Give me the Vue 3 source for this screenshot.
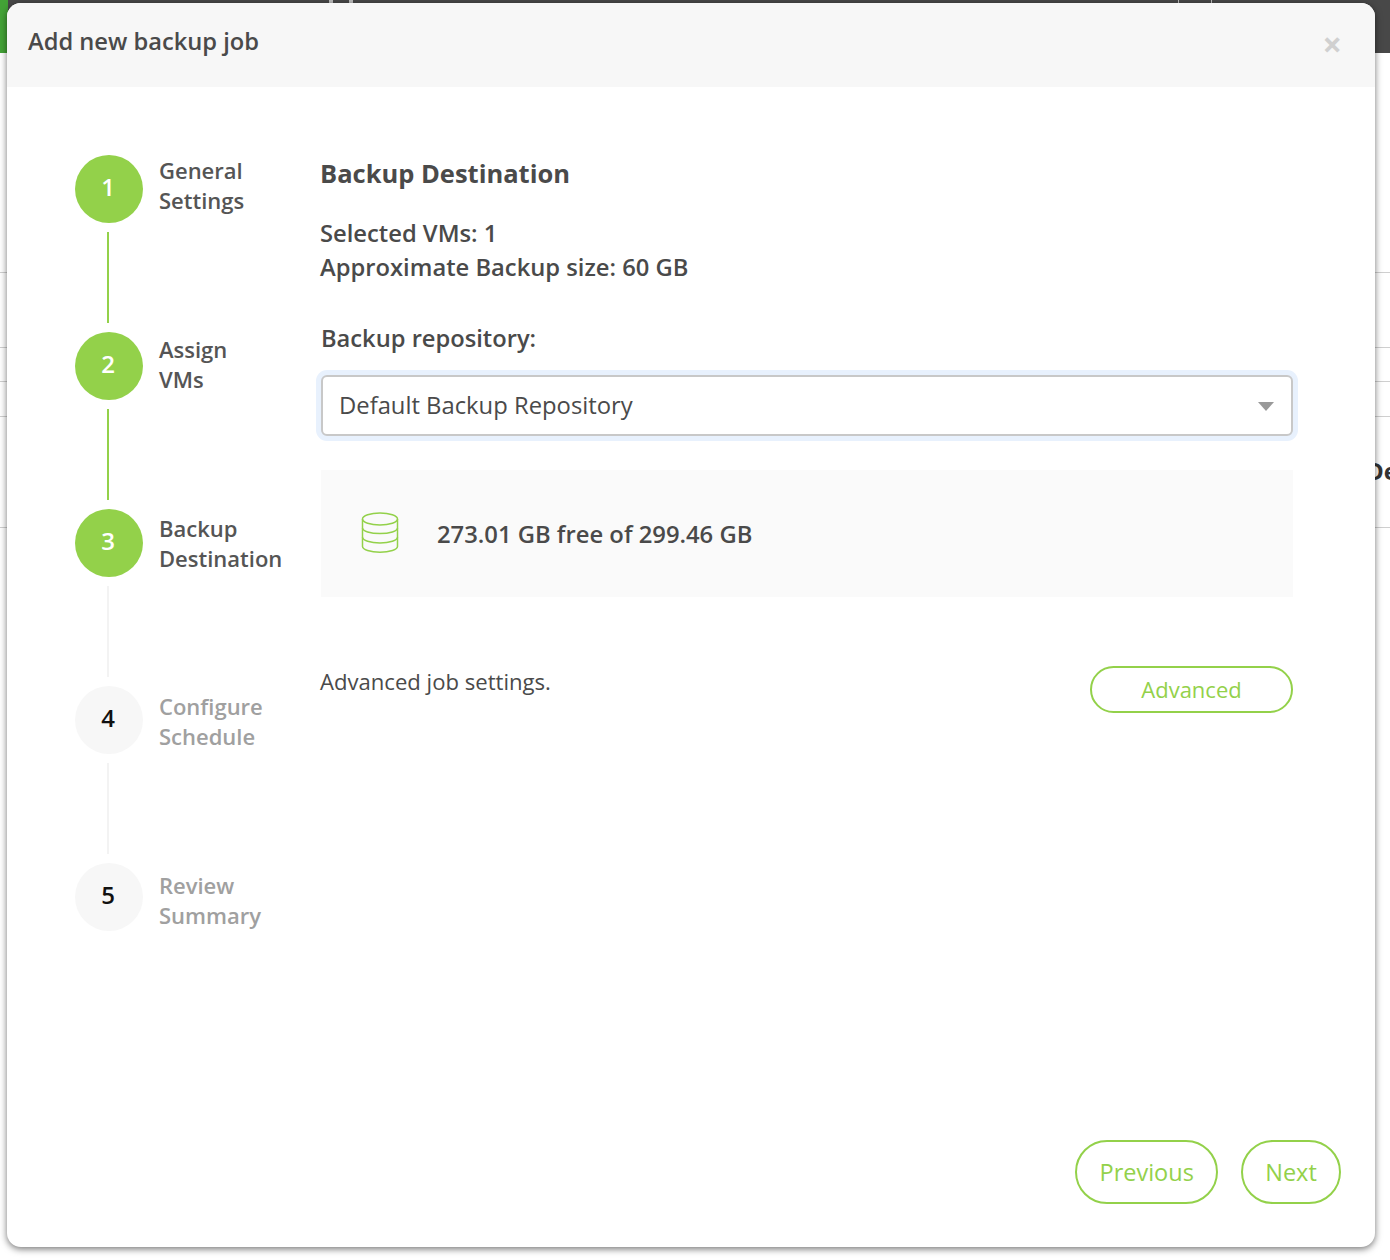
<script setup>
const steps = [
  { num: 1, lines: ['General', 'Settings'], done: true },
  { num: 2, lines: ['Assign', 'VMs'], done: true },
  { num: 3, lines: ['Backup', 'Destination'], done: true },
  { num: 4, lines: ['Configure', 'Schedule'], done: false },
  { num: 5, lines: ['Review', 'Summary'], done: false },
]
</script>

<template>
  <div class="page">
    <div class="topbar">
      <div class="brand"></div>
      <i class="tick tick-a"></i>
      <i class="tick tick-b"></i>
      <i class="tick tick-c"></i>
      <i class="tick tick-d"></i>
    </div>
    <div class="backdrop">
      <div class="bg-line line-a"></div>
      <div class="bg-line line-b"></div>
      <div class="bg-line line-c"></div>
      <div class="bg-line line-d"></div>
      <div class="bg-line line-e"></div>
      <span class="bg-text">De</span>
    </div>

    <div class="modal">
      <header class="modal-header">
        <h1>Add new backup job</h1>
        <span class="close">×</span>
      </header>

      <div class="modal-body">
        <ol class="steps">
          <li v-for="step in steps" :key="step.num" class="step" :class="{ done: step.done }">
            <div class="marker">
              <div class="circle">{{ step.num }}</div>
              <div v-if="step.num < 5" class="connector"></div>
            </div>
            <div class="step-label">
              <div v-for="line in step.lines" :key="line">{{ line }}</div>
            </div>
          </li>
        </ol>

        <main class="content">
          <h2>Backup Destination</h2>
          <p class="summary">Selected VMs: 1<br />Approximate Backup size: 60 GB</p>

          <label class="field-label">Backup repository:</label>
          <div class="select">
            <span class="select-value">Default Backup Repository</span>
            <i class="caret"></i>
          </div>

          <div class="storage">
            <svg class="db-icon" width="38" height="42" viewBox="0 0 38 42" fill="none" stroke="#93d14a" stroke-width="1.5">
              <ellipse cx="19" cy="7" rx="17.500" ry="6" />
              <path d="M1.500 7v27.500c0 3 7.800 5.700 17.500 5.700s17.500-2.700 17.500-5.700V7" />
              <path d="M1.500 16c0 3 7.800 5.600 17.500 5.600S36.500 19 36.500 16" />
              <path d="M1.500 25.300c0 3 7.800 5.600 17.500 5.600s17.500-2.600 17.500-5.600" />
            </svg>
            <span>273.01 GB free of 299.46 GB</span>
          </div>

          <div class="advanced-row">
            <span class="advanced-text">Advanced job settings.</span>
            <button class="btn btn-advanced">Advanced</button>
          </div>
        </main>
      </div>

      <footer class="modal-footer">
        <button class="btn btn-nav">Previous</button>
        <button class="btn btn-nav">Next</button>
      </footer>
    </div>
  </div>
</template>

<style>
html, body {
  margin: 0;
  background: #fff;
}
</style>

<style scoped>
* {
  box-sizing: border-box;
}

.page {
  position: relative;
  width: 1390px;
  height: 1260px;
  overflow: hidden;
  font-family: 'Open Sans', 'Noto Sans', sans-serif;
  color: #4a4a4a;
  background: #fff;
}

.topbar {
  position: relative;
  height: 53px;
  background: #484848;
}

.brand {
  width: 8px;
  height: 53px;
  background: #43a336;
}

.tick {
  position: absolute;
  top: 0;
  width: 4px;
  height: 3px;
  background: #bdbdbd;
}

.tick-a { left: 329px; }
.tick-b { left: 349px; }
.tick-c { left: 1178px; width: 1px; }
.tick-d { left: 1211px; width: 1px; }

.backdrop {
  position: relative;
  height: 1207px;
}

.bg-line {
  height: 1px;
  background: #cfcfcf;
  position: absolute;
  left: 0;
  right: 0;
}

.line-a { top: 219px; }
.line-b { top: 294px; }
.line-c { top: 328px; }
.line-d { top: 363px; }
.line-e { top: 474px; }

.bg-text {
  position: absolute;
  left: 1366px;
  top: 401px;
  font-size: 24px;
  font-weight: 700;
  color: #333;
}

.modal {
  position: absolute;
  left: 7px;
  top: 3px;
  width: 1368px;
  height: 1244px;
  display: flex;
  flex-direction: column;
  background: #fff;
  border-radius: 14px;
  box-shadow: 0 2px 7px rgba(0, 0, 0, 0.55);
  overflow: hidden;
}

.modal-header {
  flex: none;
  height: 84px;
  display: flex;
  justify-content: space-between;
  padding: 20px 33px 0 21px;
  background: #f7f7f7;
}

.modal-header h1 {
  margin: 0;
  font-size: 23.700px;
  line-height: 36px;
  font-weight: 600;
  color: #4a4a4a;
}

.close {
  margin-top: 1px;
  font-size: 34px;
  line-height: 40px;
  font-weight: 700;
  color: #d0d0d0;
}

.modal-body {
  flex: 1;
  display: flex;
  padding: 68px 82px 0 68px;
}

.steps {
  flex: none;
  width: 246px;
  margin: 0;
  padding: 0;
  list-style: none;
}

.step {
  display: flex;
  gap: 16px;
  height: 177px;
}

.marker {
  width: 68px;
  display: flex;
  flex-direction: column;
  align-items: center;
}

.circle {
  width: 68px;
  height: 68px;
  flex: none;
  padding: 0 2px 5px 0;
  border-radius: 50%;
  display: flex;
  align-items: center;
  justify-content: center;
  font-size: 24px;
  font-weight: 600;
  background: #f7f7f7;
  color: #111;
}

.connector {
  width: 2px;
  height: 91px;
  margin: 9px 2px 0 0;
  background: #f3f3f3;
}

.step-label {
  font-size: 22px;
  line-height: 30px;
  font-weight: 600;
  color: #a0a0a0;
}

/* labels drift a little further down each step */
.step:nth-child(2) .step-label { padding-top: 2px; }
.step:nth-child(3) .step-label { padding-top: 4px; }
.step:nth-child(4) .step-label { padding-top: 5px; }
.step:nth-child(5) .step-label { padding-top: 7px; }

.done .circle {
  background: #93d14a;
  color: #fff;
}

.done .connector {
  background: #93d14a;
}

.done .step-label {
  color: #555;
}

.step:nth-child(3) .connector {
  background: #f3f3f3;
}

.content {
  flex: 1;
  min-width: 0;
}

.content h2 {
  margin: 0 0 0 -1px;
  font-size: 25.500px;
  line-height: 36px;
  font-weight: 700;
  color: #4a4a4a;
}

.summary {
  margin: 25px 0 0 -1px;
  font-size: 23.750px;
  line-height: 34px;
  font-weight: 600;
}

.field-label {
  display: block;
  margin-top: 37px;
  font-size: 23.700px;
  line-height: 34px;
  font-weight: 600;
}

.select {
  display: flex;
  align-items: center;
  justify-content: space-between;
  height: 61px;
  margin-top: 20px;
  padding: 0 17px 0 16px;
  font-size: 23.800px;
  color: #4a4a4a;
  background: #fff;
  border: 2px solid #c8c8c8;
  border-radius: 6px;
  box-shadow: 0 0 0 5px #e8f1fd;
}

.select-value {
  margin-top: -2px;
}

.caret {
  width: 0;
  height: 0;
  margin-top: 2px;
  border-left: 8.500px solid transparent;
  border-right: 8.500px solid transparent;
  border-top: 9px solid #999;
}

.storage {
  display: flex;
  align-items: center;
  gap: 38px;
  height: 127px;
  margin-top: 34px;
  padding-left: 40px;
  font-size: 23.800px;
  font-weight: 600;
  background: #fafafa;
}

.db-icon {
  margin-top: -2px;
}

.advanced-row {
  display: flex;
  justify-content: space-between;
  align-items: flex-start;
  margin-top: 68px;
  font-size: 22.100px;
  line-height: 32px;
}

.advanced-text {
  margin-left: -1px;
}

.btn {
  font-family: inherit;
  font-weight: 400;
  color: #93d14a;
  background: #fff;
  border: 2px solid #93d14a;
  cursor: pointer;
}

.btn-advanced {
  width: 203px;
  height: 47px;
  margin-top: 1px;
  padding: 0 0 2px;
  font-size: 22px;
  border-radius: 24px;
}

.modal-footer {
  flex: none;
  display: flex;
  justify-content: flex-end;
  gap: 23px;
  padding: 0 34px 43px 0;
}

.btn-nav {
  height: 64px;
  padding: 0 22.200px;
  font-size: 23.500px;
  border-radius: 32px;
}
</style>
